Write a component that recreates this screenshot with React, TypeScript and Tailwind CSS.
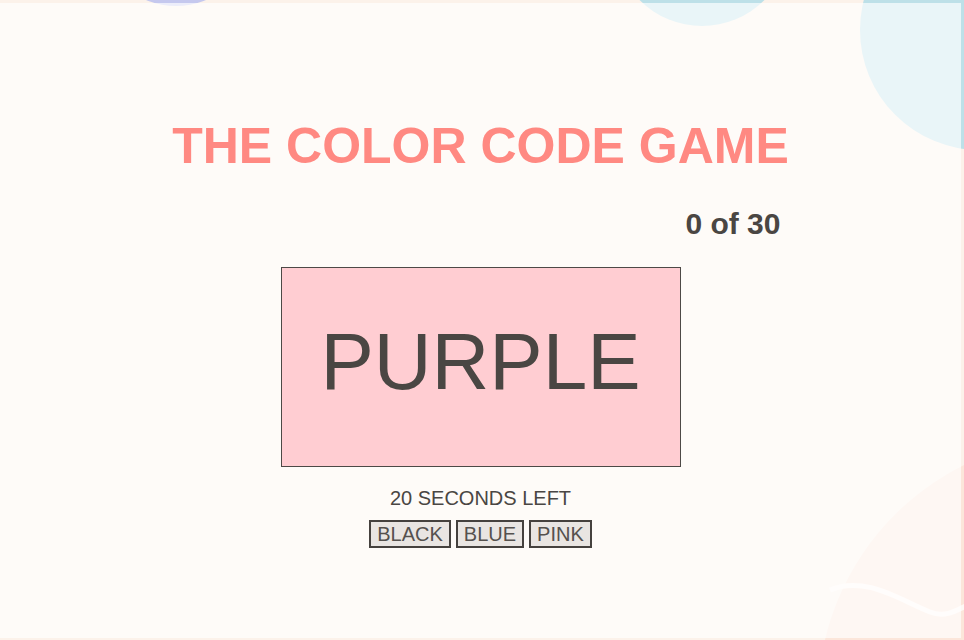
import React from "react";

const colors = ["BLACK", "BLUE", "PINK"];

function Backdrop() {
  return (
    <svg
      className="absolute inset-0"
      width="964"
      height="640"
      viewBox="0 0 964 640"
      xmlns="http://www.w3.org/2000/svg"
    >
      <rect width="964" height="640" fill="#fcf2ea" />
      <ellipse cx="176" cy="-60" rx="72" ry="66" fill="#c5c8ee" />
      <circle cx="702" cy="-62" r="88" fill="#bde0e8" />
      <circle cx="980" cy="30" r="120" fill="#bde0e8" />
      <circle cx="1080" cy="700" r="262" fill="#fce6da" />
      <path
        d="M830 590 C 865 575, 900 600, 930 612 C 950 620, 962 605, 990 595"
        stroke="#fff8f4"
        strokeWidth="5"
        fill="none"
      />
    </svg>
  );
}

export default function App() {
  return (
    <div
      className="relative h-[640px] w-[964px] overflow-hidden"
      style={{ fontFamily: '"Liberation Sans", Arial, sans-serif' }}
    >
      <Backdrop />
      <div className="relative mt-[3px] mr-[3px] h-[635px] bg-white/[0.67] text-[#4a4643]">
        <div className="flex flex-col items-center">
          <h1 className="mt-[117.5px] text-[50px] font-bold leading-none text-[#ff8982]">
            THE COLOR CODE GAME
          </h1>
          <div className="mt-[38px] w-[600px] text-right text-[30px] font-bold leading-none">
            0 of 30
          </div>
          <div className="mt-[28px] flex h-[200px] w-[400px] items-center justify-center border border-[#4d4946] bg-[#ffcdd2] pb-[9px] text-[80px] leading-none">
            PURPLE
          </div>
          <div className="mt-[21px] text-[20px] leading-none">20 SECONDS LEFT</div>
          <div className="mt-[12px] flex gap-[5px]">
            {colors.map((c) => (
              <button
                key={c}
                className="h-[28px] border-2 border-[#45413e] bg-[#e9e5e2] px-[6px] text-[20px] leading-none text-[#55514e]"
              >
                {c}
              </button>
            ))}
          </div>
        </div>
      </div>
    </div>
  );
}
